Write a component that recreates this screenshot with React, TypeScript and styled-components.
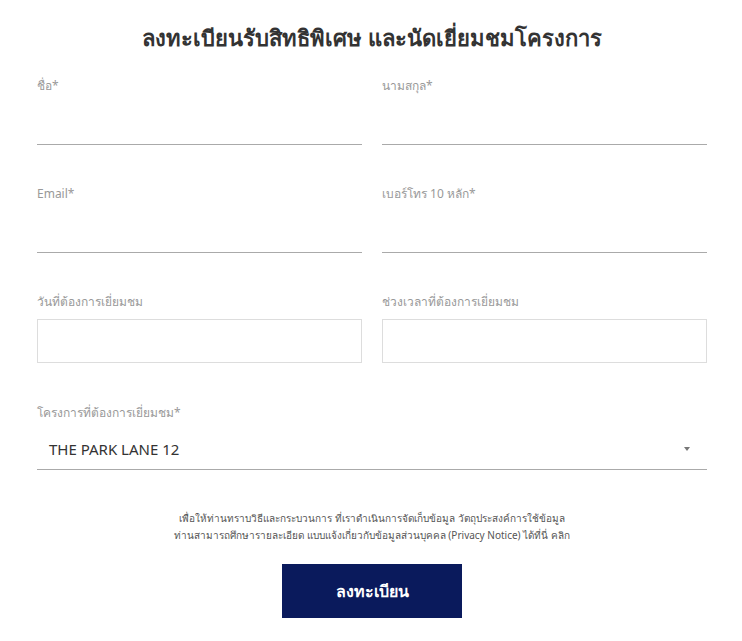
import React from "react";
import styled, { createGlobalStyle } from "styled-components";

const Global = createGlobalStyle`
  html, body { margin: 0; padding: 0; background: #fff; }
  body { font-family: "Noto Sans", "Liberation Sans", sans-serif; }
`;

const Page = styled.div`
  padding: 22px 35px 0 37px;
`;

const Title = styled.h1`
  margin: 0;
  text-align: center;
  font-size: 22px;
  line-height: 30px;
  font-weight: 600;
  color: #333;
`;

const Grid = styled.div`
  display: grid;
  grid-template-columns: 1fr 1fr;
  column-gap: 20px;
  margin-top: 26px;
`;

const Field = styled.div<{ $top?: number; $full?: boolean }>`
  display: flex;
  flex-direction: column;
  margin-top: ${(p) => p.$top ?? 0}px;
  grid-column: ${(p) => (p.$full ? "1 / -1" : "auto")};
`;

const Label = styled.label`
  font-size: 12px;
  line-height: 16px;
  color: #999;
`;

const LineInput = styled.input`
  height: 51px;
  box-sizing: border-box;
  border: none;
  border-bottom: 1px solid #aaa;
  outline: none;
  background: transparent;
  padding: 0;
  font: inherit;
`;

const BoxInput = styled.input`
  height: 44px;
  margin-top: 9px;
  box-sizing: border-box;
  border: 1px solid #ddd;
  outline: none;
  background: #fff;
  font: inherit;
`;

const Select = styled.div`
  height: 49px;
  box-sizing: border-box;
  border-bottom: 1px solid #aaa;
  display: flex;
  align-items: center;
  justify-content: space-between;
  padding: 7px 17px 0 12px;
  font-size: 15px;
  color: #333;
`;

const Caret = styled.span`
  width: 0;
  height: 0;
  border-left: 3.5px solid transparent;
  border-right: 3.5px solid transparent;
  border-top: 4px solid #777;
`;

const Notice = styled.p`
  margin: 40px 0 0;
  text-align: center;
  font-size: 10px;
  line-height: 17px;
  color: #555;
`;

const Submit = styled.button`
  display: block;
  margin: 20px auto 0;
  width: 180px;
  height: 54px;
  border: none;
  background: #0a1a5c;
  color: #fff;
  font: inherit;
  font-size: 16px;
  font-weight: 700;
  cursor: pointer;
`;

export default function App() {
  return (
    <Page>
      <Global />
      <Title>ลงทะเบียนรับสิทธิพิเศษ และนัดเยี่ยมชมโครงการ</Title>
      <Grid>
        <Field>
          <Label>ชื่อ*</Label>
          <LineInput />
        </Field>
        <Field>
          <Label>นามสกุล*</Label>
          <LineInput />
        </Field>
        <Field $top={41}>
          <Label>Email*</Label>
          <LineInput />
        </Field>
        <Field $top={41}>
          <Label>เบอร์โทร 10 หลัก*</Label>
          <LineInput />
        </Field>
        <Field $top={41}>
          <Label>วันที่ต้องการเยี่ยมชม</Label>
          <BoxInput />
        </Field>
        <Field $top={41}>
          <Label>ช่วงเวลาที่ต้องการเยี่ยมชม</Label>
          <BoxInput />
        </Field>
        <Field $top={42} $full>
          <Label>โครงการที่ต้องการเยี่ยมชม*</Label>
          <Select>
            <span>THE PARK LANE 12</span>
            <Caret />
          </Select>
        </Field>
      </Grid>
      <Notice>
        เพื่อให้ท่านทราบวิธีและกระบวนการ ที่เราดำเนินการจัดเก็บข้อมูล วัตถุประสงค์การใช้ข้อมูล
        <br />
        ท่านสามารถศึกษารายละเอียด แบบแจ้งเกี่ยวกับข้อมูลส่วนบุคคล (Privacy Notice) ได้ที่นี่ คลิก
      </Notice>
      <Submit>ลงทะเบียน</Submit>
    </Page>
  );
}
